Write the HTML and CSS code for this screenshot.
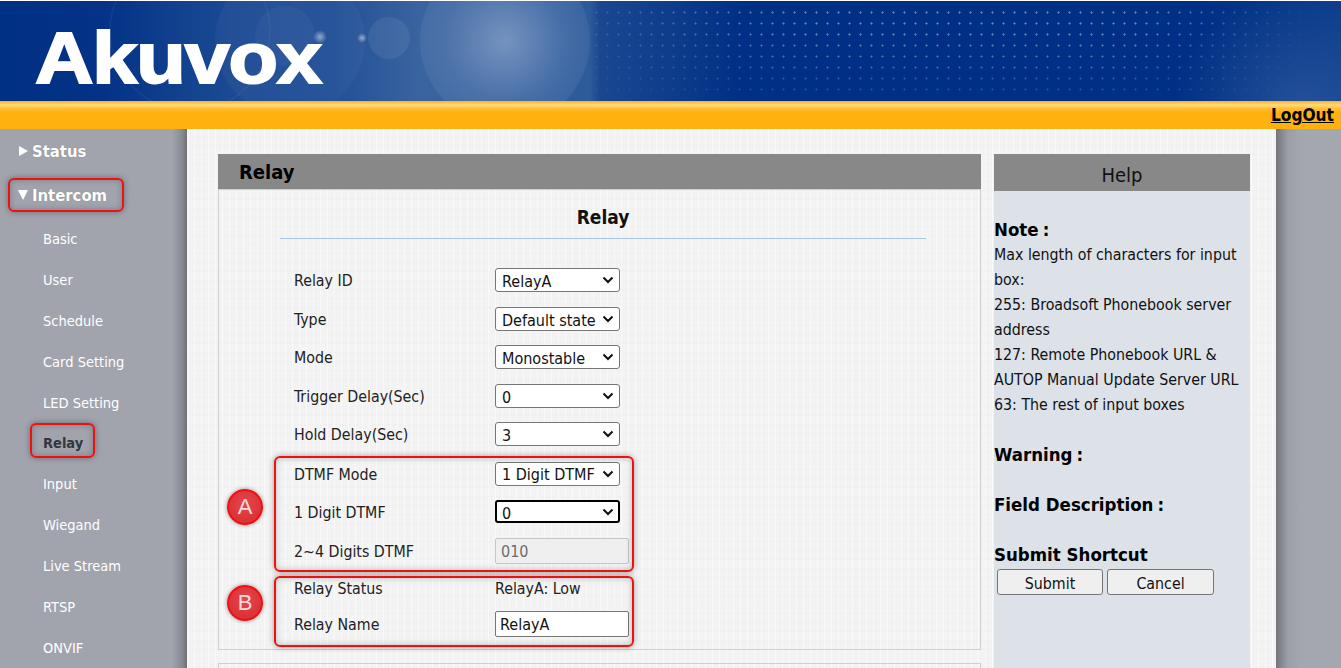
FILE: index.html
```html
<!DOCTYPE html>
<html lang="en">
<head>
<meta charset="utf-8">
<title>Akuvox - Relay</title>
<link rel="stylesheet" href="styles.css">
</head>
<body>
<header class="banner">
  <svg class="flare" viewBox="0 0 1341 100" aria-hidden="true">
    <defs>
      <radialGradient id="glow"><stop offset="0" stop-color="#8ba4ca" stop-opacity=".75"/><stop offset=".7" stop-color="#8ba4ca" stop-opacity=".25"/><stop offset="1" stop-color="#8ba4ca" stop-opacity=".14"/></radialGradient>
      <radialGradient id="spark"><stop offset="0" stop-color="#fff" stop-opacity=".5"/><stop offset="1" stop-color="#fff" stop-opacity="0"/></radialGradient>
    </defs>
    <circle cx="505" cy="40" r="85" fill="url(#glow)"/>
    <circle cx="190" cy="30" r="80" fill="none" stroke="#fff" stroke-opacity=".05" stroke-width="1.5"/>
    <circle cx="290" cy="40" r="75" fill="#fff" opacity=".03"/>
    <circle cx="285" cy="35" r="30" fill="#fff" opacity=".04"/>
    <circle cx="389" cy="37" r="21" fill="#fff" opacity=".07"/>
    <circle cx="320" cy="36" r="7" fill="url(#spark)"/>
    <circle cx="362" cy="37" r="5" fill="url(#spark)"/>
  </svg>
  <div class="dots"></div>
  <div class="logo">Akuvox</div>
</header>
<div class="topbar"><a class="logout" href="#">LogOut</a></div>
<div class="page">
  <nav class="side">
    <a class="top" href="#"><span class="tri right"></span>Status</a>
    <a class="top" href="#"><span class="tri down"></span>Intercom</a>
    <a class="sub" href="#">Basic</a>
    <a class="sub" href="#">User</a>
    <a class="sub" href="#">Schedule</a>
    <a class="sub" href="#">Card Setting</a>
    <a class="sub" href="#">LED Setting</a>
    <a class="sub active" href="#">Relay</a>
    <a class="sub" href="#">Input</a>
    <a class="sub" href="#">Wiegand</a>
    <a class="sub" href="#">Live Stream</a>
    <a class="sub" href="#">RTSP</a>
    <a class="sub" href="#">ONVIF</a>
  </nav>
  <main class="content">
    <section class="col-main">
      <h1 class="page-title">Relay</h1>
      <div class="panel">
        <h2 class="panel-title">Relay</h2>
        <form class="form">
          <div class="row r1"><label>Relay ID</label><select><option>RelayA</option></select></div>
          <div class="row r2"><label>Type</label><select><option>Default state</option></select></div>
          <div class="row r3"><label>Mode</label><select><option>Monostable</option></select></div>
          <div class="row r4"><label>Trigger Delay(Sec)</label><select><option>0</option></select></div>
          <div class="row r5"><label>Hold Delay(Sec)</label><select><option>3</option></select></div>
          <div class="row r6"><label>DTMF Mode</label><select><option>1 Digit DTMF</option></select></div>
          <div class="row r7"><label>1 Digit DTMF</label><select class="focused"><option>0</option></select></div>
          <div class="row r8"><label>2~4 Digits DTMF</label><input class="text" value="010" disabled></div>
          <div class="row r9"><label>Relay Status</label><span class="value">RelayA: Low</span></div>
          <div class="row r10"><label>Relay Name</label><input class="text" value="RelayA"></div>
        </form>
      </div>
      <div class="panel next"></div>
    </section>
    <aside class="help">
      <h2 class="help-title">Help</h2>
      <div class="help-body">
        <h3 class="note">Note<span class="colon">:</span></h3>
        <p>Max length of characters for input box:<br>255: Broadsoft Phonebook server address<br>127: Remote Phonebook URL &amp; AUTOP Manual Update Server URL<br>63: The rest of input boxes</p>
        <h3 class="warn">Warning<span class="colon">:</span></h3>
        <h3 class="field">Field Description<span class="colon">:</span></h3>
        <h3 class="short">Submit Shortcut</h3>
        <div class="btns"><button type="button">Submit</button><button type="button">Cancel</button></div>
      </div>
    </aside>
  </main>
  <div class="rail"></div>
</div>
<div class="mark m-intercom"></div>
<div class="mark m-relay"></div>
<div class="mark m-a"></div>
<div class="mark m-b"></div>
<div class="badge b-a">A</div>
<div class="badge b-b">B</div>
</body>
</html>
```
FILE: styles.css
```css
* { box-sizing: border-box; }
html, body { margin: 0; height: 668px; overflow: hidden; }
body { width: 1341px; position: relative; background: #fff; font-family: "DejaVu Sans Condensed", "DejaVu Sans", sans-serif; font-stretch: condensed; font-size: 16px; color: #111; }

.banner { height: 100px; margin-top: 1px; position: relative; overflow: hidden;
  background: radial-gradient(ellipse 130px 120px at 1300px 110px, rgba(70,110,170,.45), transparent),
    linear-gradient(90deg, #003083 0, #033287 100px, #1b4a93 230px, #214f97 330px, #3a649f 420px, #2c5a9a 590px, #1a4790 600px, #0c3b8b 680px, #003085 740px, #003085 1200px, #0c3c8c 1341px); }
.flare { position: absolute; inset: 0; width: 100%; height: 100%; }
.dots { position: absolute; left: 591px; right: 25px; top: 6px; height: 90px;
  background-image: radial-gradient(circle, rgba(255,255,255,.42) 0.8px, transparent 1.4px);
  background-size: 11px 11px;
  -webkit-mask-image: linear-gradient(90deg, rgba(0,0,0,.3), #000 30%, #000 75%, transparent), linear-gradient(180deg, #000 30%, rgba(0,0,0,.25));
  -webkit-mask-composite: source-in; mask-composite: intersect; }
.logo { width: max-content; padding: 19px 0 0 35px; font: bold 72px/76px "Liberation Sans", Arial, sans-serif; color: #fff; letter-spacing: -1px; transform: scaleX(1.125); transform-origin: 35px 50%; -webkit-text-stroke: 2px #fff; font-stretch: normal; }

.topbar { height: 28px; display: flex; justify-content: flex-end; align-items: center; padding-right: 7px;
  background: linear-gradient(180deg, #ffb10f 0, #ffd980 4px, #ffc23f 7px, #ffb20f 11px, #ffb20f 100%); }
.logout { color: #000; font-weight: 700; font-size: 17.2px; line-height: 22px; text-decoration: underline; }

.page { display: flex; height: 539px; }
.side { width: 187px; flex: none; display: flex; flex-direction: column; background: linear-gradient(90deg, #a1a4ad 0, #a1a4ad 172px, #888b92 182px, #6e7076 187px); }
.top { height: 44px; flex: none; display: flex; align-items: center; padding-left: 19px; color: #fff; font-weight: 700; font-size: 16.5px; text-decoration: none; text-shadow: 0 0 1px #777; }
.tri { width: 0; height: 0; margin-right: 4px; border-style: solid; }
.tri.right { border-width: 5.5px 0 5.5px 9px; border-color: transparent transparent transparent #fff; }
.tri.down { border-width: 10px 5.5px 0 5.5px; border-color: #fff transparent transparent transparent; margin-left: -1px; margin-right: 4px; }
.sub { height: 40.9px; flex: none; display: flex; align-items: center; padding: 3px 0 0 43px; color: #fff; font-size: 14.5px; text-decoration: none; }
.sub.active { color: #33373f; font-weight: 700; }

.content { width: 1089px; flex: none; display: flex; align-items: flex-start; gap: 13px; padding: 25px 0 0 31px; background-color: #f3f3f3;
  background-image: repeating-linear-gradient(90deg, rgba(255,255,255,.5) 0 1px, transparent 1px 7px), repeating-linear-gradient(0deg, rgba(0,0,0,.012) 0 1px, transparent 1px 9px); }
.col-main { width: 763px; flex: none; }
.page-title { margin: 0; height: 35px; padding: 2px 0 0 21px; background: #888; color: #000; font-size: 20px; line-height: 33px; font-weight: 700; }
.panel { border: 1px solid #cfcfcf; height: 461px; }
.panel.next { height: 20px; margin-top: 13px; border-bottom: 0; }
.panel-title { margin: 0 54px 0 61px; height: 49px; border-bottom: 1px solid #a9c4e8; text-align: center; font-size: 19px; line-height: 55px; font-weight: 700; color: #111; }

.form { display: flex; flex-direction: column; padding: 29px 0 0 75px; }
.row { display: flex; align-items: center; flex: none; }
.row label { width: 201px; flex: none; padding-top: 1px; font-size: 15.8px; color: #222; }
.row select { appearance: none; width: 125px; height: 24px; padding: 2px 0 0 6px; border: 1px solid #767676; border-radius: 3px; font-family: inherit; font-stretch: condensed; font-size: 16px; color: #111;
  background: #fff url("data:image/svg+xml,%3Csvg xmlns='http://www.w3.org/2000/svg' width='12' height='8'%3E%3Cpath d='M1.5 1.5 6 6l4.500-4.500' fill='none' stroke='%23111' stroke-width='2'/%3E%3C/svg%3E") no-repeat right 5px center; }
.row select.focused { border: 2px solid #000; height: 23px; padding-left: 5px; background-position: right 4px center; }
.text { width: 134px; height: 26px; padding: 0 4px; border: 1px solid #767676; border-radius: 2px; background: #fff; font-family: inherit; font-stretch: condensed; font-size: 16px; color: #111; }
.text:disabled { background: #efefef; border-color: #c6c6c6; color: #6d6d6d; padding-left: 5px; }
.value { font-size: 15.8px; color: #222; }
.r1 { height: 24px; margin-bottom: 15px; }
.r2 { height: 24px; margin-bottom: 14px; }
.r3 { height: 24px; margin-bottom: 15px; }
.r4 { height: 24px; margin-bottom: 14px; }
.r5 { height: 24px; margin-bottom: 16px; }
.r6 { height: 23px; margin-bottom: 15px; }
.r7 { height: 23px; margin-bottom: 15px; }
.r8 { height: 26px; margin-bottom: 13px; }
.r9 { height: 22px; margin-bottom: 12px; }
.r10 { height: 26px; }

.help { width: 256px; flex: none; height: 514px; display: flex; flex-direction: column; }
.help-title { margin: 0; height: 37px; background: #888; text-align: center; font-size: 20px; line-height: 42px; font-weight: 400; color: #111; }
.help-body { flex: 1; background: #dce2e8; padding-top: 26px; }
.help-body h3 { margin: 0; font-size: 18.5px; line-height: 25px; font-weight: 700; color: #000; }
.colon { margin-left: 4px; }
.help-body p { margin: 0; font-size: 15.8px; line-height: 25px; color: #111; }
.warn, .field, .short { padding-top: 25px; }
.btns { display: flex; gap: 4px; padding-left: 3px; margin-top: 2px; }
.btns button { width: 106px; height: 26px; padding: 2px 0 0; background: #efefef; border: 1px solid #767676; border-radius: 3px; font-family: inherit; font-stretch: condensed; font-size: 15.8px; color: #111; }
.btns button + button { width: 107px; }

.rail { flex: 1; background: linear-gradient(90deg, #74767c 0, #9b9ea5 12px, #a4a7af 25px); }

.mark { position: absolute; border: 2px solid #f01010; border-radius: 6px; box-shadow: 0 0 6px rgba(0,0,0,.35), inset 0 0 6px rgba(0,0,0,.25); }
.m-intercom { left: 8px; top: 178px; width: 116px; height: 34px; }
.m-relay { left: 30px; top: 423px; width: 65px; height: 35px; }
.m-a { left: 274px; top: 456px; width: 360px; height: 116px; }
.m-b { left: 274px; top: 576px; width: 360px; height: 71px; }
.badge { position: absolute; width: 36px; height: 36px; border-radius: 50%; background: radial-gradient(circle at 50% 40%, #e8454a, #d42c32); border: 2px solid #f01010; color: #f9dcdc; font: 22px/32px "Liberation Sans", sans-serif; text-align: center; box-shadow: 0 0 4px rgba(0,0,0,.4); }
.b-a { left: 227px; top: 489px; }
.b-b { left: 227px; top: 585px; }
```
